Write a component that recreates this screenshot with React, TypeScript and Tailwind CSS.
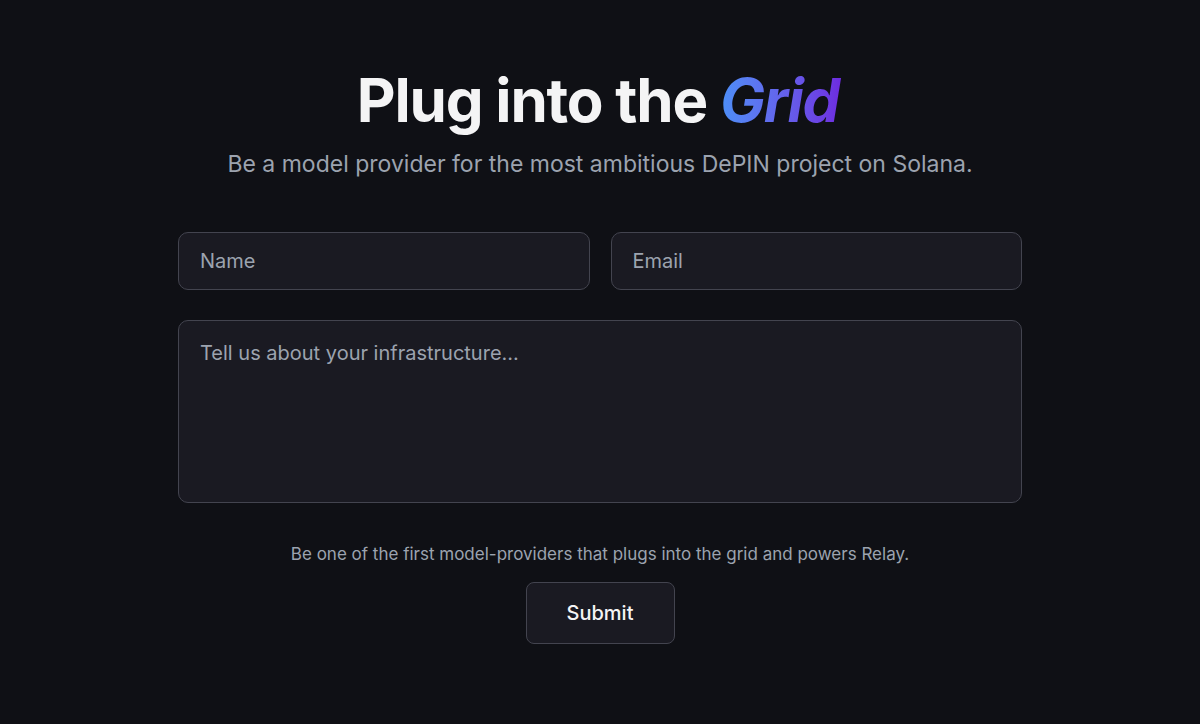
export default function App() {
  return (
    <div className="min-h-screen w-full bg-[#0f1015] font-['Inter',sans-serif] flex flex-col items-center">
      <h1 className="mt-[68px] text-[60px] leading-[64px] font-bold tracking-[-0.02em] text-[#f4f4f5]">
        Plug into the{' '}
        <span className="italic bg-gradient-to-r from-[#4b8ff7] to-[#6d28e0] bg-clip-text text-transparent pr-1">
          Grid
        </span>
      </h1>
      <p className="mt-[16px] text-[23px] leading-8 text-[#9ca3af]">
        Be a model provider for the most ambitious DePIN project on Solana.
      </p>

      <form className="mt-[52px] w-[844px] flex flex-col" onSubmit={(e) => e.preventDefault()}>
        <div className="grid grid-cols-2 gap-[21px]">
          <input
            type="text"
            placeholder="Name"
            className="h-[58px] rounded-[10px] border border-[#43444f] bg-[#1a1a22] px-[21px] text-[20px] text-white placeholder-[#9ca3af] focus:outline-none"
          />
          <input
            type="email"
            placeholder="Email"
            className="h-[58px] rounded-[10px] border border-[#43444f] bg-[#1a1a22] px-[21px] text-[20px] text-white placeholder-[#9ca3af] focus:outline-none"
          />
        </div>
        <textarea
          placeholder="Tell us about your infrastructure..."
          className="mt-[30px] h-[183px] resize-none rounded-[10px] border border-[#43444f] bg-[#1a1a22] px-[21px] py-[18px] text-[20px] leading-7 text-white placeholder-[#9ca3af] focus:outline-none"
        />
        <p className="mt-[39px] text-center text-[17px] leading-6 text-[#9ca3af]">
          Be one of the first model-providers that plugs into the grid and powers Relay.
        </p>
        <div className="mt-[16px] flex justify-center">
          <button
            type="submit"
            className="h-[62px] w-[149px] rounded-[8px] border border-[#43444f] bg-[#1a1a22] text-[20px] font-medium text-[#f4f4f5]"
          >
            Submit
          </button>
        </div>
      </form>
    </div>
  );
}
